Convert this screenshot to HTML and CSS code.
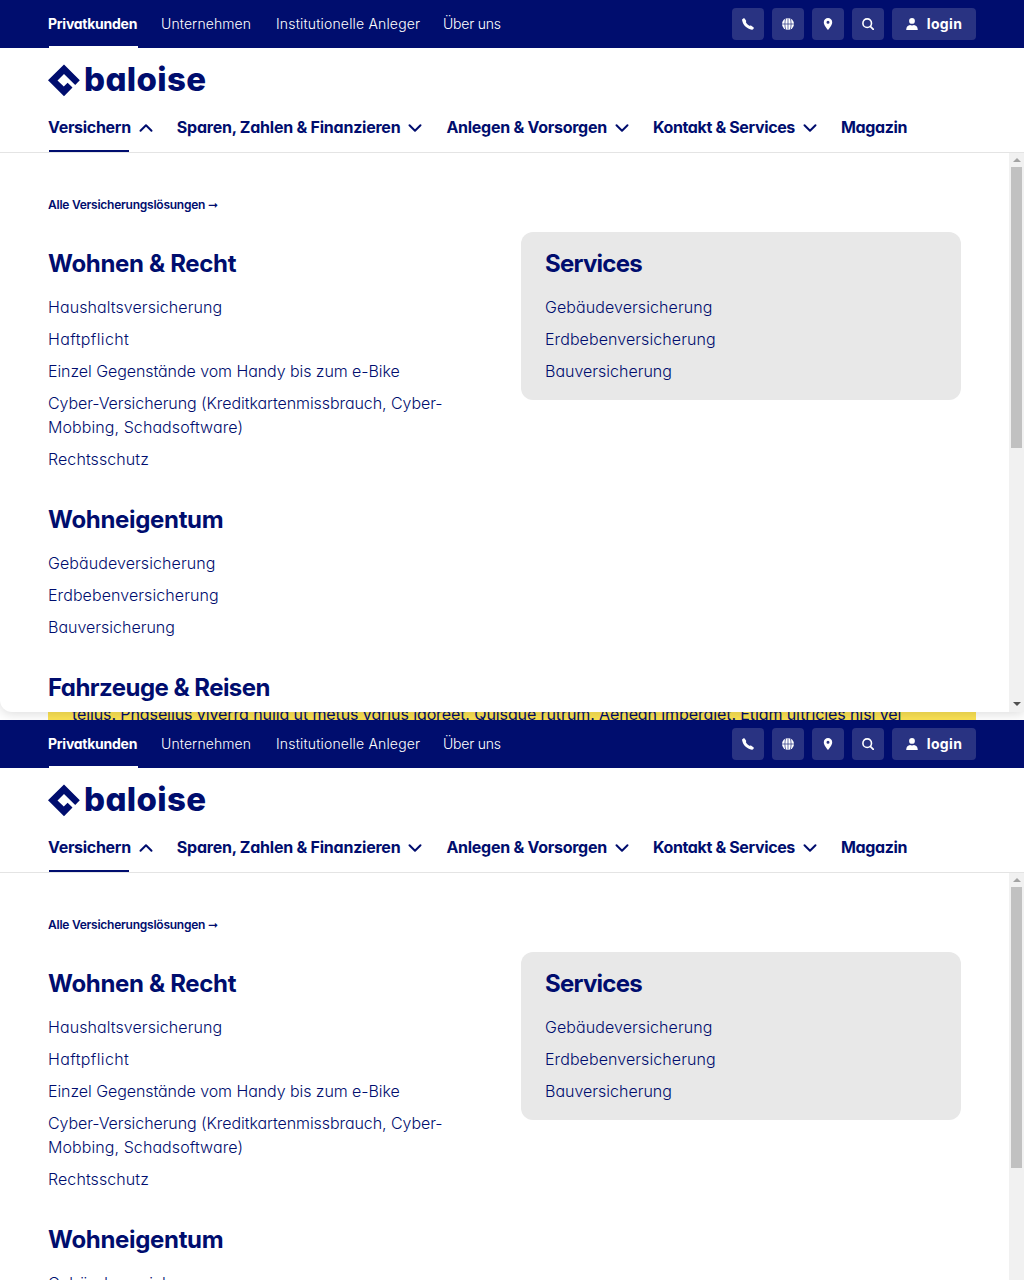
FILE: index.html
```
<!DOCTYPE html>
<html lang="de">
<head>
<meta charset="utf-8">
<title>Baloise</title>
<link rel="stylesheet" href="styles.css">
</head>
<body>
<svg class="sprite" width="0" height="0">
  <symbol id="up" viewBox="0 0 14 14"><path d="M1.5 9.8 7 4.2l5.5 5.6" fill="none" stroke="currentColor" stroke-width="2" stroke-linecap="round" stroke-linejoin="round"/></symbol>
  <symbol id="down" viewBox="0 0 14 14"><path d="M1.5 4.2 7 9.8l5.5-5.6" fill="none" stroke="currentColor" stroke-width="2" stroke-linecap="round" stroke-linejoin="round"/></symbol>
  <symbol id="phone" viewBox="0 0 12 12"><path d="M.3 1.200 1.300.4c.4-.3 1-.2 1.300.2l1.400 1.800c.3.400.3.900 0 1.300l-.1.600c.7 1.300 2 2.600 3.500 3.500l.7-.1c.4-.2.8-.2 1.200.1l2.100 1.400c.5.3.6.900.3 1.300l-.6.8c-.3.400-.7.500-1.200.400C4.800 10.900 1 7.200.1 2.300 0 1.800 0 1.500.3 1.200Z"/></symbol>
  <symbol id="globe" viewBox="0 0 12 12"><circle cx="6" cy="6" r="6"/><path d="M0 6h12M6 0v12M3.800.2C2.600 3.800 2.600 8.200 3.800 11.800M8.200.2c1.200 3.600 1.200 8 0 11.600" fill="none" stroke="#293382" stroke-width=".7"/></symbol>
  <symbol id="pin" viewBox="0 0 12 12"><path fill-rule="evenodd" d="M6 0a4.200 4.200 0 0 0-4.200 4.200C1.800 7.200 5 10.600 6 12c1-1.400 4.200-4.800 4.200-7.800A4.200 4.200 0 0 0 6 0Zm0 2.700a1.500 1.500 0 1 1 0 3 1.500 1.500 0 0 1 0-3Z"/></symbol>
  <symbol id="search" viewBox="0 0 12 12"><path d="M8.300 8.300 11.300 11.300" stroke="currentColor" stroke-width="1.700" stroke-linecap="round"/><circle cx="5.200" cy="5.200" r="4.300" fill="none" stroke="currentColor" stroke-width="1.600"/></symbol>
  <symbol id="user" viewBox="0 0 12 12"><circle cx="6" cy="2.900" r="2.900"/><path d="M.2 12c0-3.200 2-4.700 3.800-4.900 1.300.6 2.700.6 4 0 1.800.2 3.800 1.700 3.800 4.900Z"/></symbol>
</svg>

<section class="screen">
  <div class="topbar">
    <nav class="portals">
      <a class="portal active">Privatkunden</a>
      <a class="portal unternehmen">Unternehmen</a>
      <a class="portal anleger">Institutionelle Anleger</a>
      <a class="portal about">Über uns</a>
    </nav>
    <div class="tools">
      <a class="tool"><svg><use href="#phone"/></svg></a>
      <a class="tool"><svg><use href="#globe"/></svg></a>
      <a class="tool"><svg><use href="#pin"/></svg></a>
      <a class="tool"><svg><use href="#search"/></svg></a>
      <a class="tool login"><svg><use href="#user"/></svg>login</a>
    </div>
  </div>
  <header class="header">
    <svg class="logo" viewBox="0 0 160 34">
      <path d="M16 .5 31.8 16.3 27.2 21 16 10 9.5 16.4 15.8 22.6 19.6 18.7 24.5 23.5 16 32.2 0 16.3Z"/>
      <text class="wordmark" x="36" y="27" textLength="122">baloise</text>
    </svg>
    <nav class="menu">
      <a class="entry active"><span>Versichern</span><svg><use href="#up"/></svg></a>
      <a class="entry sparen"><span>Sparen, Zahlen &amp; Finanzieren</span><svg><use href="#down"/></svg></a>
      <a class="entry anlegen"><span>Anlegen &amp; Vorsorgen</span><svg><use href="#down"/></svg></a>
      <a class="entry kontakt"><span>Kontakt &amp; Services</span><svg><use href="#down"/></svg></a>
      <a class="entry magazin"><span>Magazin</span></a>
    </nav>
  </header>
  <div class="flyout">
    <div class="content">
      <a class="all">Alle Versicherungslösungen <span class="arrow">➞</span></a>
      <div class="columns">
        <div class="column">
          <h2>Wohnen &amp; Recht</h2>
          <ul>
            <li>Haushaltsversicherung</li>
            <li class="wide">Haftpflicht</li>
            <li class="tight">Einzel Gegenstände vom Handy bis zum e-Bike</li>
            <li><span class="tight">Cyber-Versicherung (Kreditkartenmissbrauch, Cyber-</span><br>Mobbing, Schadsoftware)</li>
            <li>Rechtsschutz</li>
          </ul>
          <h2>Wohneigentum</h2>
          <ul>
            <li>Gebäudeversicherung</li>
            <li>Erdbebenversicherung</li>
            <li class="normal">Bauversicherung</li>
          </ul>
          <h2 class="fahrzeuge">Fahrzeuge &amp; Reisen</h2>
        </div>
        <div class="card">
          <h2 class="services">Services</h2>
          <ul>
            <li>Gebäudeversicherung</li>
            <li>Erdbebenversicherung</li>
            <li class="normal">Bauversicherung</li>
          </ul>
        </div>
      </div>
    </div>
    <div class="scrollbar"><i class="arrow-up"></i><i class="thumb"></i><i class="arrow-down"></i></div>
  </div>
  <div class="teaser"><p>tellus. Phasellus viverra nulla ut metus varius laoreet. Quisque rutrum. Aenean imperdiet. Etiam ultricies nisi vel</p></div>
</section>

<section class="screen cropped">
  <div class="topbar">
    <nav class="portals">
      <a class="portal active">Privatkunden</a>
      <a class="portal unternehmen">Unternehmen</a>
      <a class="portal anleger">Institutionelle Anleger</a>
      <a class="portal about">Über uns</a>
    </nav>
    <div class="tools">
      <a class="tool"><svg><use href="#phone"/></svg></a>
      <a class="tool"><svg><use href="#globe"/></svg></a>
      <a class="tool"><svg><use href="#pin"/></svg></a>
      <a class="tool"><svg><use href="#search"/></svg></a>
      <a class="tool login"><svg><use href="#user"/></svg>login</a>
    </div>
  </div>
  <header class="header">
    <svg class="logo" viewBox="0 0 160 34">
      <path d="M16 .5 31.8 16.3 27.2 21 16 10 9.5 16.4 15.8 22.6 19.6 18.7 24.5 23.5 16 32.2 0 16.3Z"/>
      <text class="wordmark" x="36" y="27" textLength="122">baloise</text>
    </svg>
    <nav class="menu">
      <a class="entry active"><span>Versichern</span><svg><use href="#up"/></svg></a>
      <a class="entry sparen"><span>Sparen, Zahlen &amp; Finanzieren</span><svg><use href="#down"/></svg></a>
      <a class="entry anlegen"><span>Anlegen &amp; Vorsorgen</span><svg><use href="#down"/></svg></a>
      <a class="entry kontakt"><span>Kontakt &amp; Services</span><svg><use href="#down"/></svg></a>
      <a class="entry magazin"><span>Magazin</span></a>
    </nav>
  </header>
  <div class="flyout">
    <div class="content">
      <a class="all">Alle Versicherungslösungen <span class="arrow">➞</span></a>
      <div class="columns">
        <div class="column">
          <h2>Wohnen &amp; Recht</h2>
          <ul>
            <li>Haushaltsversicherung</li>
            <li class="wide">Haftpflicht</li>
            <li class="tight">Einzel Gegenstände vom Handy bis zum e-Bike</li>
            <li><span class="tight">Cyber-Versicherung (Kreditkartenmissbrauch, Cyber-</span><br>Mobbing, Schadsoftware)</li>
            <li>Rechtsschutz</li>
          </ul>
          <h2>Wohneigentum</h2>
          <ul>
            <li>Gebäudeversicherung</li>
          </ul>
        </div>
        <div class="card">
          <h2 class="services">Services</h2>
          <ul>
            <li>Gebäudeversicherung</li>
            <li>Erdbebenversicherung</li>
            <li class="normal">Bauversicherung</li>
          </ul>
        </div>
      </div>
    </div>
    <div class="scrollbar"><i class="arrow-up"></i><i class="thumb"></i></div>
  </div>
</section>
</body>
</html>
```
FILE: styles.css
```
* { box-sizing: border-box; }
body {
  margin: 0;
  height: 1280px;
  overflow: hidden;
  background: #fff;
  color: #000d6e;
  font: 400 16px/24px Inter, sans-serif;
  font-feature-settings: "cv11";
}
svg { fill: currentColor; flex: none; }
.sprite { position: absolute; }
h2, ul, p { margin: 0; padding: 0; }
ul { list-style: none; }

.screen { height: 720px; overflow: hidden; }
.cropped { height: 560px; }

.topbar {
  display: flex;
  justify-content: space-between;
  height: 48px;
  padding: 0 48px;
  background: #000d6e;
  color: #fff;
}
.portals { display: flex; }
.portal {
  height: 48px;
  font-size: 14px;
  line-height: 48px;
  font-weight: 300;
  white-space: nowrap;
}
.portal.active {
  width: 113px;
  font-weight: 700;
  letter-spacing: -.26px;
  background: linear-gradient(#fff, #fff) 1px 100% / 89px 2px no-repeat;
}
.unternehmen { width: 115px; letter-spacing: .1px; }
.anleger { width: 167px; letter-spacing: .17px; }
.about { letter-spacing: -.22px; }
.tools { display: flex; gap: 8px; align-items: center; }
.tool {
  display: flex;
  align-items: center;
  justify-content: center;
  width: 32px;
  height: 32px;
  border-radius: 4px;
  background: #293382;
}
.tool svg { width: 12px; height: 12px; }
.login {
  width: 84px;
  gap: 9px;
  font-size: 14px;
  font-weight: 700;
  letter-spacing: .35px;
}

.header {
  position: relative;
  z-index: 2;
  height: 105px;
  padding: 16px 48px 0;
  border-bottom: 1px solid #e4e4e4;
  background: #fff;
}
.logo { display: block; width: 160px; height: 34px; overflow: visible; }
.wordmark { font: 800 33px Inter, sans-serif; font-feature-settings: "cv11"; }
.menu { display: flex; gap: 24px; height: 54px; }
.entry {
  display: flex;
  gap: 8px;
  height: 54px;
  padding-top: 17px;
  font-weight: 700;
  line-height: 24px;
  letter-spacing: -.3px;
  white-space: nowrap;
}
.entry svg { width: 14px; height: 14px; margin-top: 6px; }
.entry.active { background: linear-gradient(currentColor, currentColor) 1px 100% / 80px 2px no-repeat; }
.sparen { letter-spacing: -.235px; }
.anlegen { letter-spacing: -.26px; }
.kontakt { letter-spacing: -.36px; }
.magazin { letter-spacing: -.38px; }

.flyout {
  position: relative;
  z-index: 1;
  display: flex;
  height: 559px;
  overflow: hidden;
  border-radius: 0 0 0 12px;
  background: #fff;
  box-shadow: 0 2px 12px rgba(0, 0, 0, .14);
}
.cropped .flyout { height: 407px; border-radius: 0; }
.content { flex: 1; padding: 40px 48px 0; }
.all {
  display: block;
  height: 39px;
  font-size: 12px;
  font-weight: 600;
  letter-spacing: -.24px;
}
.arrow { font-family: "DejaVu Sans", sans-serif; font-weight: 700; letter-spacing: 0; }
.columns { display: grid; grid-template-columns: 440px 440px; gap: 33px; align-items: start; }
.column { padding-top: 16px; }
.card { padding: 16px 24px; border-radius: 12px; background: #e8e8e8; }
h2 { margin-bottom: 15px; font-size: 24px; line-height: 32px; font-weight: 700; letter-spacing: -.32px; white-space: nowrap; }
ul { padding-bottom: 1px; }
ul + h2 { margin-top: 32px; }
.fahrzeuge { letter-spacing: -.54px; }
.services { letter-spacing: -.75px; }
li { font-weight: 300; letter-spacing: .08px; white-space: nowrap; }
li + li { margin-top: 8px; }
.wide { letter-spacing: .36px; }
.tight { letter-spacing: -.07px; }
.normal { letter-spacing: 0; }

.scrollbar {
  display: flex;
  flex-direction: column;
  align-items: center;
  width: 15px;
  background: #f1f1f1;
}
.arrow-up { height: 0; margin: 5px 0 5px; border: 4px solid transparent; border-top: 0; border-bottom-color: #a3a3a3; }
.thumb { flex: none; width: 11px; height: 281px; background: #c1c1c1; }
.arrow-down { height: 0; margin: auto 0 6px; border: 4px solid transparent; border-bottom: 0; border-top-color: #505050; }

.teaser {
  height: 28px;
  margin: -20px 48px 0;
  padding: 10px 24px 0;
  background: #fbe253;
}
.teaser p { letter-spacing: -.1px; white-space: nowrap; }
```
